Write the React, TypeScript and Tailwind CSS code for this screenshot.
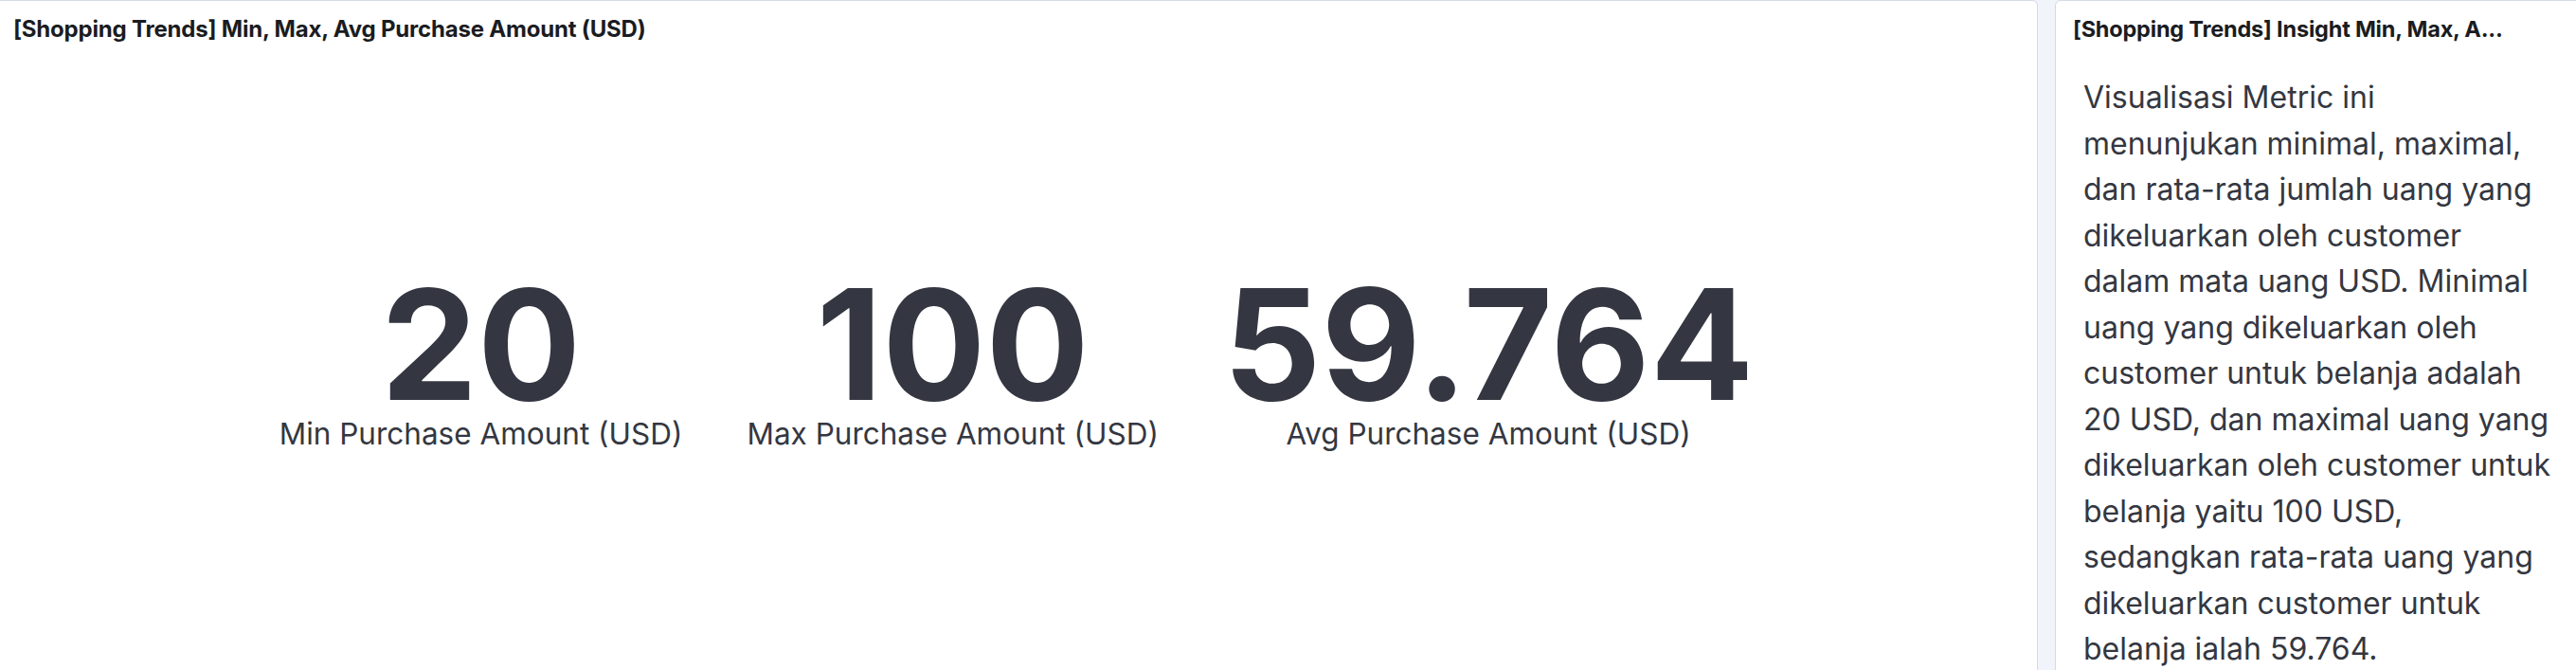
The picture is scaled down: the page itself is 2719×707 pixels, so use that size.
import React from 'react';

type Metric = {
  value: string;
  label: string;
};

const metrics: Metric[] = [
  { value: '20', label: 'Min Purchase Amount (USD)' },
  { value: '100', label: 'Max Purchase Amount (USD)' },
  { value: '59.764', label: 'Avg Purchase Amount (USD)' },
];

const insightLines: string[] = [
  'Visualisasi Metric ini',
  'menunjukan minimal, maximal,',
  'dan rata-rata jumlah uang yang',
  'dikeluarkan oleh customer',
  'dalam mata uang USD. Minimal',
  'uang yang dikeluarkan oleh',
  'customer untuk belanja adalah',
  '20 USD, dan maximal uang yang',
  'dikeluarkan oleh customer untuk',
  'belanja yaitu 100 USD,',
  'sedangkan rata-rata uang yang',
  'dikeluarkan customer untuk',
  'belanja ialah 59.764.',
];

const App: React.FC = () => {
  return (
    <div className="flex h-[707px] w-[2719px] gap-[18px] overflow-hidden bg-[#f1f4fa] font-['Inter',sans-serif]">
      {/* Metric panel */}
      <section className="-ml-[5px] flex h-[714px] w-[2156px] shrink-0 flex-col rounded-md border border-[#d3dae6] bg-white">
        <h2 className="truncate px-[18px] pt-[14px] text-[24px] font-bold leading-[31px] tracking-[-0.2px] text-[#1a1c21]">
          [Shopping Trends] Min, Max, Avg Purchase Amount (USD)
        </h2>
        <div className="flex flex-1 items-center justify-center gap-[68px] pt-[4px]">
          {metrics.map((metric) => (
            <div key={metric.label} className="flex flex-col items-center text-[#343741]">
              <span className="text-[162px] font-bold leading-[152px]">{metric.value}</span>
              <span className="text-[31.5px] leading-[38px]">{metric.label}</span>
            </div>
          ))}
        </div>
      </section>

      {/* Markdown insight panel */}
      <section className="flex h-[714px] w-[600px] shrink-0 flex-col rounded-md border border-[#d3dae6] bg-white">
        <h2 className="truncate px-[18px] pt-[14px] text-[23.5px] font-bold leading-[31px] tracking-[-0.2px] text-[#1a1c21]">
          [Shopping Trends] Insight Min, Max, A...
        </h2>
        <p className="mt-[33px] whitespace-nowrap px-[29px] text-[32px] leading-[48.5px] text-[#343741]">
          {insightLines.map((line, index) => (
            <React.Fragment key={index}>
              {line}
              {index < insightLines.length - 1 && <br />}
            </React.Fragment>
          ))}
        </p>
      </section>
    </div>
  );
};

export default App;
